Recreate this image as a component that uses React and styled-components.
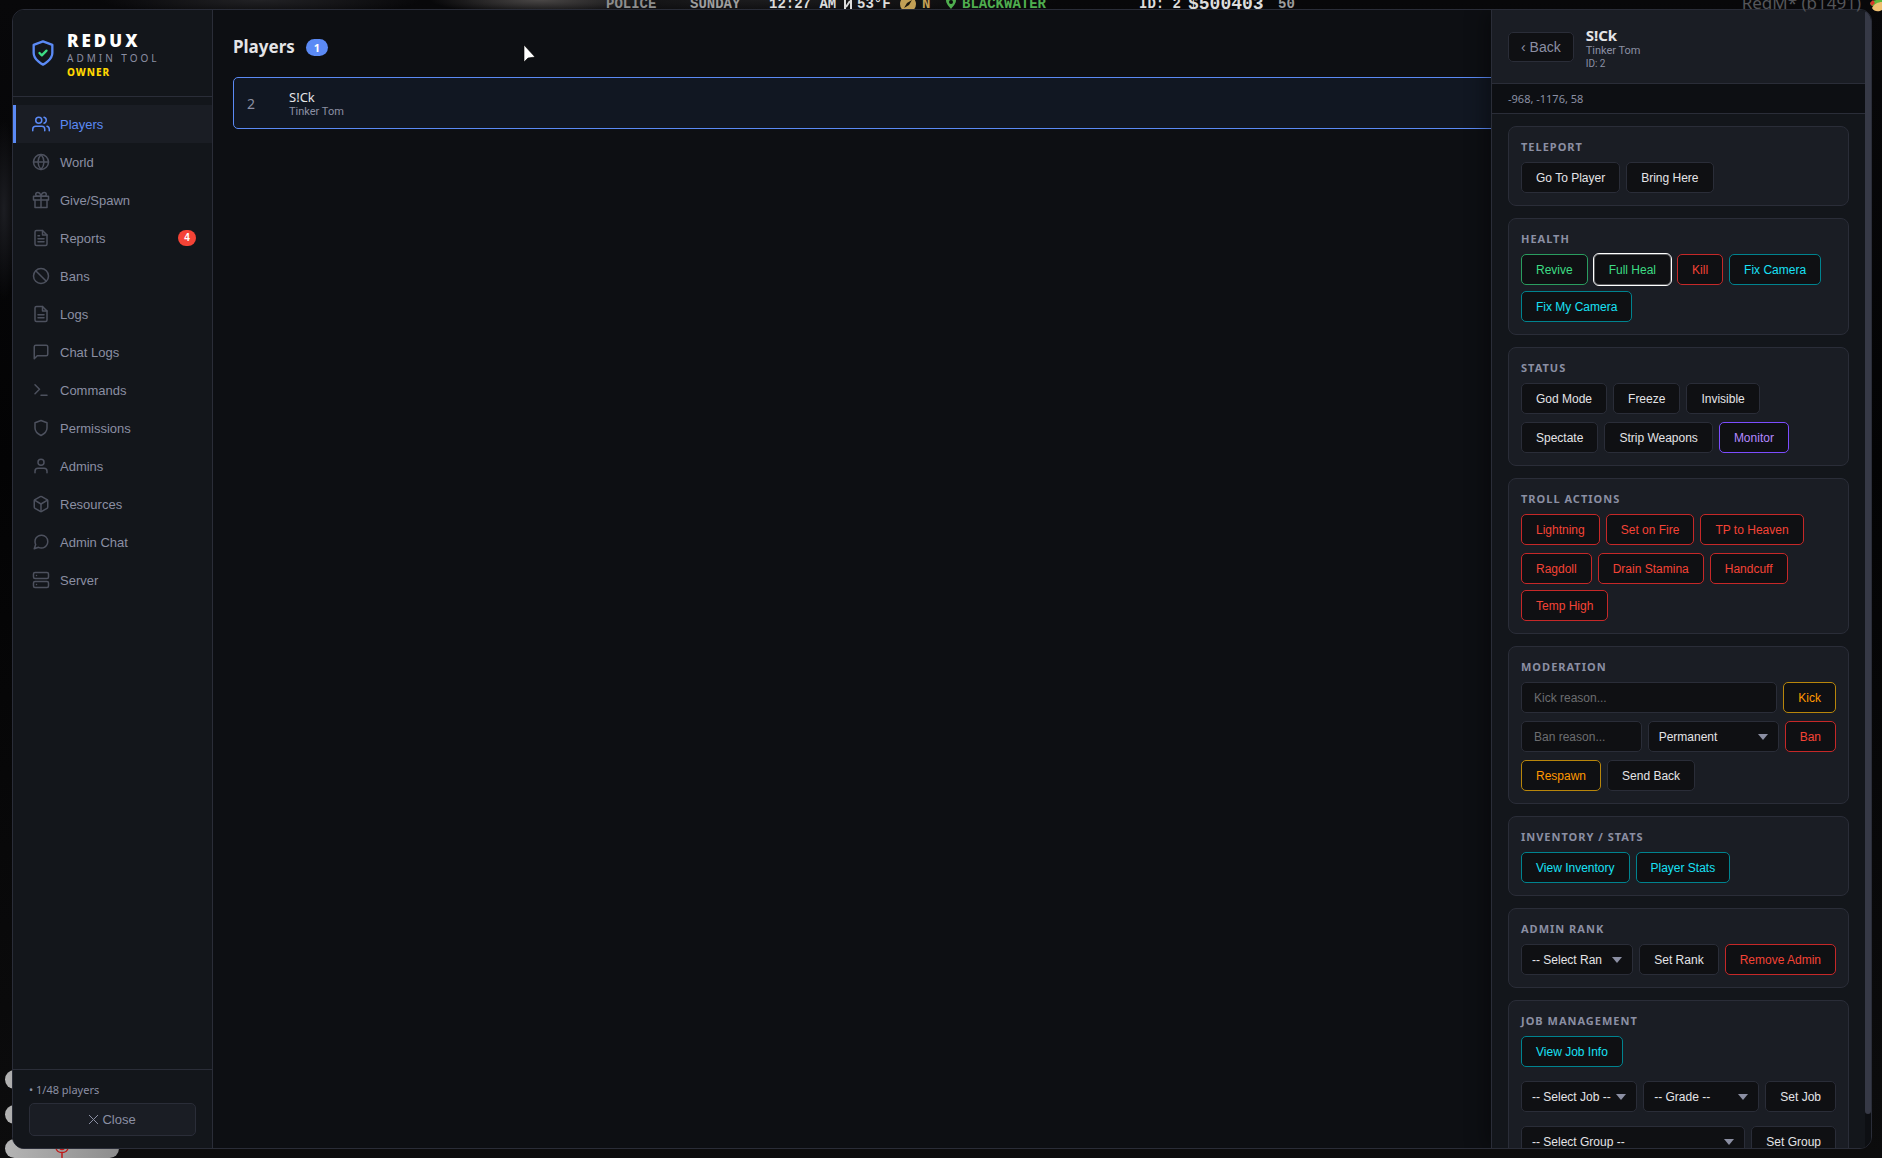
import React, { useState } from 'react';
import styled, { createGlobalStyle, css } from 'styled-components';
import {
  FiUsers, FiGlobe, FiGift, FiFileText, FiSlash, FiMessageSquare, FiTerminal, FiShield, FiUser, FiBox,
  FiMessageCircle, FiServer,
} from 'react-icons/fi';

const GlobalStyle = createGlobalStyle`
  * {
    box-sizing: border-box;
  }
  body {
    margin: 0;
    background: #050506;
    color: #e4e4e7;
    font-family: "Noto Sans", "Open Sans", sans-serif;
    overflow: hidden;
  }
  button, input, select {
    font-family: "Liberation Sans", Arial, sans-serif;
  }
`;

// game world behind the menu
const Scene = styled.div`
  position: relative;
  display: flex;
  height: 100vh;
  padding: 9px 10px 9px 12px;
  overflow: hidden;
  background:
    radial-gradient(ellipse 14px 90px at 4px 210px, #1c1d22, transparent),
    radial-gradient(ellipse 110px 14px at 540px 0, #4a4746, transparent),
    radial-gradient(ellipse 160px 16px at 260px 0, #222225, transparent),
    radial-gradient(ellipse 300px 16px at 760px 0, #1c1c1e, transparent),
    linear-gradient(#08080a, #030304 40%, #0c0c0d);
`;

const Hud = styled.div`
  position: absolute;
  top: -6px;
  left: ${(props) => props.$x}px;
  color: ${(props) => props.$color || '#dcdcdc'};
  font: bold ${(props) => (props.$big ? 18 : 14)}px/20px "Liberation Mono", monospace;
  white-space: pre;
`;

const HudIcon = styled.svg`
  position: absolute;
  top: 0;
  left: ${(props) => props.$x}px;
`;

const Version = styled.div`
  position: absolute;
  top: -9px;
  right: 21px;
  z-index: 5;
  color: #55565a;
  font-size: 17px;
  line-height: 24px;
`;

const Blob = styled.div`
  position: absolute;
  left: 5px;
  bottom: ${(props) => props.$bottom}px;
  width: ${(props) => props.$width}px;
  height: 19px;
  border-radius: 10px;
  background: linear-gradient(90deg, #b4b4b4, #8c8c8c);
`;

const MicMark = styled.svg`
  position: absolute;
  left: 55px;
  bottom: 0;
`;

const Panel = styled.div`
  position: relative;
  flex: 1;
  display: flex;
  min-width: 0;
  border: 1px solid #2a2d38;
  border-radius: 12px;
  background: #0d0f13;
  overflow: hidden;
`;

const Sidebar = styled.aside`
  flex: none;
  width: 200px;
  display: flex;
  flex-direction: column;
  background: #13161b;
  border-right: 1px solid #2a2d38;
`;

const Brand = styled.div`
  display: flex;
  align-items: center;
  gap: 10px;
  height: 87px;
  padding: 0 16px;
  border-bottom: 1px solid #2a2d38;
`;

const BrandText = styled.div`
  display: flex;
  flex-direction: column;
  padding-top: 4px;
`;

const BrandName = styled.div`
  color: #fff;
  font-size: 17px;
  font-weight: 900;
  line-height: 20px;
  letter-spacing: 3px;
`;

const BrandSub = styled.div`
  color: #8b8fa3;
  font-size: 10px;
  line-height: 14px;
  letter-spacing: 3px;
`;

const BrandRole = styled.div`
  color: #ffd700;
  font-size: 10px;
  font-weight: 800;
  line-height: 14px;
  letter-spacing: 1px;
`;

const Nav = styled.nav`
  flex: 1;
  padding-top: 8px;
`;

const NavItem = styled.a`
  display: flex;
  align-items: center;
  gap: 10px;
  height: 38px;
  padding: 0 16px;
  border-left: 3px solid transparent;
  color: #8b8fa3;
  font: 13px "Liberation Sans", Arial, sans-serif;
  text-decoration: none;

  svg {
    width: 18px;
    height: 18px;
    color: #4d515e;
  }

  ${(props) => props.$active && css`
    background: #1a1d24;
    border-left-color: #5b8af5;
    color: #5b8af5;

    svg {
      color: #5b8af5;
    }
  `}
`;

const AlertCount = styled.span`
  margin-left: auto;
  min-width: 18px;
  padding: 0 5px;
  border-radius: 10px;
  background: #f44336;
  color: #fff;
  font-size: 10px;
  font-weight: bold;
  line-height: 16px;
  text-align: center;
`;

const SideFooter = styled.div`
  padding: 12px 16px;
  border-top: 1px solid #2a2d38;
`;

const Online = styled.div`
  color: #8b8fa3;
  font-size: 11px;
  line-height: 15px;
  margin-bottom: 6px;
`;

const CloseButton = styled.button`
  display: flex;
  align-items: center;
  justify-content: center;
  gap: 4px;
  width: 100%;
  height: 33px;
  border: 1px solid #2a2d38;
  border-radius: 5px;
  background: #1a1d24;
  color: #8b8fa3;
  font-size: 13px;
`;

const Main = styled.main`
  flex: 1;
  min-width: 0;
  padding: 20px;
`;

const Heading = styled.div`
  display: flex;
  align-items: center;
  gap: 11px;
  height: 34px;
  margin-bottom: 13px;

  h1 {
    margin: 0;
    font-size: 17px;
    font-weight: 700;
    line-height: 24px;
  }
`;

const Count = styled.span`
  padding: 0 8px;
  border-radius: 10px;
  background: #5b8af5;
  color: #fff;
  font-size: 11px;
  font-weight: bold;
  line-height: 17px;
`;

const PlayerRow = styled.div`
  display: flex;
  align-items: center;
  height: 52px;
  padding: 0 13px;
  border: 1px solid #5b8af5;
  border-radius: 5px;
  background: #111722;
`;

const PlayerId = styled.div`
  width: 42px;
  color: #8b8fa3;
  font-size: 14px;
`;

const NameBlock = styled.div`
  padding-top: 2px;
`;

const PlayerName = styled.div`
  font-size: 13px;
  line-height: 16px;
`;

const SubText = styled.div`
  color: #8b8fa3;
  font-family: Roboto, sans-serif;
  font-size: ${(props) => (props.$small ? 10 : 11)}px;
  line-height: ${(props) => (props.$small ? 12 : 14)}px;
`;

// slides over the player list
const Drawer = styled.section`
  position: absolute;
  top: 0;
  right: 0;
  bottom: 0;
  display: flex;
  width: 380px;
  border-left: 1px solid #2a2d38;
  background: #13161b;
  box-shadow: -4px 0 20px rgba(0, 0, 0, 0.4);
`;

const DrawerScroll = styled.div`
  flex: 1;
  min-width: 0;
  overflow-y: auto;
  scrollbar-width: none;
`;

const ScrollTrack = styled.div`
  flex: none;
  width: 6px;
  background: #0d0f13;
`;

const ScrollThumb = styled.div`
  height: 97%;
  border-radius: 3px;
  background: #363946;
`;

const DrawerHeader = styled.header`
  display: flex;
  align-items: center;
  gap: 12px;
  height: 74px;
  padding: 0 16px;
  border-bottom: 1px solid #2a2d38;
  background: #1a1d24;
`;

const BackButton = styled.button`
  height: 30px;
  padding: 0 12px;
  border: 1px solid #2a2d38;
  border-radius: 5px;
  background: #0f1013;
  color: #8b8fa3;
  font-size: 14px;
`;

const DrawerName = styled.div`
  font-size: 15px;
  font-weight: 700;
  line-height: 18px;
`;

const Coords = styled.div`
  height: 30px;
  padding: 0 16px;
  border-bottom: 1px solid #2a2d38;
  background: #0d0f13;
  color: #8b8fa3;
  font-size: 11px;
  line-height: 29px;
`;

const Cards = styled.div`
  display: flex;
  flex-direction: column;
  gap: 12px;
  padding: 12px 16px;
`;

const CardBox = styled.div`
  padding: 12px;
  border: 1px solid #2a2d38;
  border-radius: 8px;
  background: #1a1d24;

  h2 {
    margin: 0 0 8px;
    color: #8b8fa3;
    font-size: 11px;
    font-weight: 700;
    line-height: 15px;
    letter-spacing: 1px;
    text-transform: uppercase;
  }
`;

const Rows = styled.div`
  display: flex;
  flex-direction: column;
  gap: ${(props) => (props.$loose ? 14 : 8)}px;
`;

const Row = styled.div`
  display: flex;
  flex-wrap: ${(props) => (props.$form ? 'nowrap' : 'wrap')};
  gap: 6px;
`;

const tones = {
  green: { text: '#3ddc84', line: '#2a9d5f' },
  red: { text: '#f44336', line: '#c62828' },
  cyan: { text: '#18e0f5', line: '#00838f' },
  purple: { text: '#b388ff', line: '#7c4dff' },
  orange: { text: '#ff9800', line: '#b8860b' },
};

const ActionButton = styled.button`
  flex: none;
  height: 31px;
  padding: 0 14px;
  border: 1px solid ${(props) => (props.$tone ? tones[props.$tone].line : '#2a2d38')};
  border-radius: 5px;
  background: #0f1013;
  color: ${(props) => (props.$tone ? tones[props.$tone].text : '#e4e4e7')};
  font-size: 12px;

  ${(props) => props.$focused && css`
    outline: 1px solid #fff;
    border-color: #5a5b5e;
  `}
`;

const TextInput = styled.input`
  flex: 1;
  min-width: 0;
  height: 31px;
  padding: 0 12px;
  border: 1px solid #2a2d38;
  border-radius: 5px;
  background: #0f1013;
  color: #e4e4e7;
  font-size: 12px;

  &::placeholder {
    color: #6c6d70;
  }
`;

const SelectWrap = styled.div`
  position: relative;
  flex: 1;
  min-width: 0;

  select {
    appearance: none;
    display: block;
    width: 100%;
    height: 31px;
    padding: 0 ${(props) => (props.$clip ? 30 : 24)}px 0 10px;
    border: 1px solid #2a2d38;
    border-radius: 5px;
    background: #0f1013;
    color: #e4e4e7;
    font-size: 12px;
  }

  svg {
    position: absolute;
    top: 13px;
    right: 11px;
    pointer-events: none;
  }
`;

const FixedSelect = styled(SelectWrap)`
  flex: none;
  width: 131px;
`;

const CursorSvg = styled.svg`
  position: absolute;
  left: 523px;
  top: 44px;
`;

const LogIcon = () => (
  <svg
    viewBox="0 0 24 24"
    fill="none"
    stroke="currentColor"
    strokeWidth="2"
    strokeLinecap="round"
    strokeLinejoin="round"
  >
    <path d="M14 2H6a2 2 0 0 0-2 2v16a2 2 0 0 0 2 2h12a2 2 0 0 0 2-2V8z" />
    <path d="M14 2v6h6M16 13H8M16 17H8" />
  </svg>
);

const navItems = [
  { label: 'Players', icon: FiUsers },
  { label: 'World', icon: FiGlobe },
  { label: 'Give/Spawn', icon: FiGift },
  { label: 'Reports', icon: FiFileText, alerts: 4 },
  { label: 'Bans', icon: FiSlash },
  { label: 'Logs', icon: LogIcon },
  { label: 'Chat Logs', icon: FiMessageSquare },
  { label: 'Commands', icon: FiTerminal },
  { label: 'Permissions', icon: FiShield },
  { label: 'Admins', icon: FiUser },
  { label: 'Resources', icon: FiBox },
  { label: 'Admin Chat', icon: FiMessageCircle },
  { label: 'Server', icon: FiServer },
];

const Logo = () => (
  <svg width="28" height="28" viewBox="0 0 24 24" fill="none" strokeWidth="2" strokeLinecap="round" strokeLinejoin="round">
    <path d="M12 22s8-4 8-10V5l-8-3-8 3v7c0 6 8 10 8 10z" stroke="#5b8af5" />
    <path d="M9 12l2 2 4-4" stroke="#3ddc84" />
  </svg>
);

const Card = ({ title, loose, children }) => (
  <CardBox>
    <h2>{title}</h2>
    <Rows $loose={loose}>{children}</Rows>
  </CardBox>
);

const Select = ({ label, as: Wrap = SelectWrap, clip }) => (
  <Wrap $clip={clip}>
    <select aria-label={label}>
      <option>{label}</option>
    </select>
    <svg width="10" height="6" viewBox="0 0 10 6">
      <path d="M0 0h10L5 6z" fill="#8b8fa3" />
    </svg>
  </Wrap>
);

const Cursor = () => (
  <CursorSvg width="14" height="20" viewBox="0 0 14 20">
    <path d="M1 1v17l4-4 7-1z" fill="#fff" stroke="#000" strokeWidth="0.6" />
  </CursorSvg>
);

const App = () => {
  const [active, setActive] = useState('Players');

  return (
    <Scene>
      <GlobalStyle />
      <Hud $x={606} $color="#8d8d8d">POLICE</Hud>
      <Hud $x={690} $color="#9d9d9d">SUNDAY</Hud>
      <Hud $x={769}>12:27 AM</Hud>
      <HudIcon $x={843} width="10" height="9" viewBox="0 0 10 9">
        <path d="M2 0v9M8 0v9M3 7l4-6" stroke="#dcdcdc" strokeWidth="2" />
      </HudIcon>
      <Hud $x={857}>53°F</Hud>
      <HudIcon $x={900} width="16" height="9" viewBox="0 0 16 9">
        <circle cx="8" cy="4" r="8" fill="#c29f55" />
        <path d="M4 8l3-5 5-3-3 5z" fill="#1c170c" />
      </HudIcon>
      <Hud $x={922} $color="#c29f55">N</Hud>
      <HudIcon $x={945} width="12" height="9" viewBox="0 0 12 9">
        <path d="M1 0c0 4 3 6 5 9 2-3 5-5 5-9z" fill="#4fae4f" />
        <circle cx="6" cy="2" r="2" fill="#0a0a0b" />
      </HudIcon>
      <Hud $x={962} $color="#4fae4f">BLACKWATER</Hud>
      <Hud $x={1139}>ID: 2</Hud>
      <Hud $x={1188} $big>$500403</Hud>
      <Hud $x={1278} $color="#9d9d9d">50</Hud>
      <Version>RedM* (b1491)</Version>
      <HudIcon $x={1869} width="13" height="12" viewBox="0 0 13 12">
        <path d="M1 4c1-3 4-4 8-4h4v8C9 5 4 8 1 4z" fill="#5fb83a" />
        <path d="M1 3l3-3 2 3-3 3z" fill="#d8362a" />
        <path d="M3 8c2-4 6-6 10-6v8c-3 2-8 2-10-2z" fill="#f0c070" />
      </HudIcon>
      <Blob $bottom={69} $width={40} />
      <Blob $bottom={34} $width={40} />
      <Blob $bottom={0} $width={114} />
      <MicMark width="14" height="12" viewBox="0 0 14 12" fill="none" stroke="#c01818" strokeWidth="1.5">
        <path d="M1 2c1 6 11 6 12 0M7 6v6M5 2c0 2 4 2 4 0" />
      </MicMark>

      <Panel>
        <Sidebar>
          <Brand>
            <Logo />
            <BrandText>
              <BrandName>REDUX</BrandName>
              <BrandSub>ADMIN TOOL</BrandSub>
              <BrandRole>OWNER</BrandRole>
            </BrandText>
          </Brand>
          <Nav>
            {navItems.map(({ label, icon: Icon, alerts }) => (
              <NavItem
                key={label}
                href={`#${label}`}
                $active={label === active}
                onClick={() => setActive(label)}
              >
                <Icon />
                {label}
                {alerts && <AlertCount>{alerts}</AlertCount>}
              </NavItem>
            ))}
          </Nav>
          <SideFooter>
            <Online>• 1/48 players</Online>
            <CloseButton>
              <svg width="9" height="9" viewBox="0 0 9 9" stroke="currentColor">
                <path d="M0 0l9 9M9 0L0 9" />
              </svg>
              Close
            </CloseButton>
          </SideFooter>
        </Sidebar>

        <Main>
          <Heading>
            <h1>Players</h1>
            <Count>1</Count>
          </Heading>
          <PlayerRow>
            <PlayerId>2</PlayerId>
            <NameBlock>
              <PlayerName>S!Ck</PlayerName>
              <SubText>Tinker Tom</SubText>
            </NameBlock>
          </PlayerRow>
        </Main>

        <Drawer>
          <DrawerScroll>
            <DrawerHeader>
              <BackButton>‹ Back</BackButton>
              <NameBlock>
                <DrawerName>S!Ck</DrawerName>
                <SubText>Tinker Tom</SubText>
                <SubText $small>ID: 2</SubText>
              </NameBlock>
            </DrawerHeader>
            <Coords>-968, -1176, 58</Coords>
            <Cards>
              <Card title="Teleport">
                <Row>
                  <ActionButton>Go To Player</ActionButton>
                  <ActionButton>Bring Here</ActionButton>
                </Row>
              </Card>
              <Card title="Health">
                <Row>
                  <ActionButton $tone="green">Revive</ActionButton>
                  <ActionButton $tone="green" $focused>Full Heal</ActionButton>
                  <ActionButton $tone="red">Kill</ActionButton>
                  <ActionButton $tone="cyan">Fix Camera</ActionButton>
                  <ActionButton $tone="cyan">Fix My Camera</ActionButton>
                </Row>
              </Card>
              <Card title="Status">
                <Row>
                  <ActionButton>God Mode</ActionButton>
                  <ActionButton>Freeze</ActionButton>
                  <ActionButton>Invisible</ActionButton>
                </Row>
                <Row>
                  <ActionButton>Spectate</ActionButton>
                  <ActionButton>Strip Weapons</ActionButton>
                  <ActionButton $tone="purple">Monitor</ActionButton>
                </Row>
              </Card>
              <Card title="Troll Actions">
                <Row>
                  <ActionButton $tone="red">Lightning</ActionButton>
                  <ActionButton $tone="red">Set on Fire</ActionButton>
                  <ActionButton $tone="red">TP to Heaven</ActionButton>
                </Row>
                <Row>
                  <ActionButton $tone="red">Ragdoll</ActionButton>
                  <ActionButton $tone="red">Drain Stamina</ActionButton>
                  <ActionButton $tone="red">Handcuff</ActionButton>
                  <ActionButton $tone="red">Temp High</ActionButton>
                </Row>
              </Card>
              <Card title="Moderation">
                <Row $form>
                  <TextInput aria-label="Kick reason" placeholder="Kick reason..." />
                  <ActionButton $tone="orange">Kick</ActionButton>
                </Row>
                <Row $form>
                  <TextInput aria-label="Ban reason" placeholder="Ban reason..." />
                  <Select label="Permanent" as={FixedSelect} />
                  <ActionButton $tone="red">Ban</ActionButton>
                </Row>
                <Row>
                  <ActionButton $tone="orange">Respawn</ActionButton>
                  <ActionButton>Send Back</ActionButton>
                </Row>
              </Card>
              <Card title="Inventory / Stats">
                <Row>
                  <ActionButton $tone="cyan">View Inventory</ActionButton>
                  <ActionButton $tone="cyan">Player Stats</ActionButton>
                </Row>
              </Card>
              <Card title="Admin Rank">
                <Row $form>
                  <Select label="-- Select Rank --" clip />
                  <ActionButton>Set Rank</ActionButton>
                  <ActionButton $tone="red">Remove Admin</ActionButton>
                </Row>
              </Card>
              <Card title="Job Management" loose>
                <Row>
                  <ActionButton $tone="cyan">View Job Info</ActionButton>
                </Row>
                <Row $form>
                  <Select label="-- Select Job --" />
                  <Select label="-- Grade --" />
                  <ActionButton>Set Job</ActionButton>
                </Row>
                <Row $form>
                  <Select label="-- Select Group --" />
                  <ActionButton>Set Group</ActionButton>
                </Row>
              </Card>
            </Cards>
          </DrawerScroll>
          <ScrollTrack>
            <ScrollThumb />
          </ScrollTrack>
        </Drawer>
      </Panel>

      <Cursor />
    </Scene>
  );
};

export default App;
